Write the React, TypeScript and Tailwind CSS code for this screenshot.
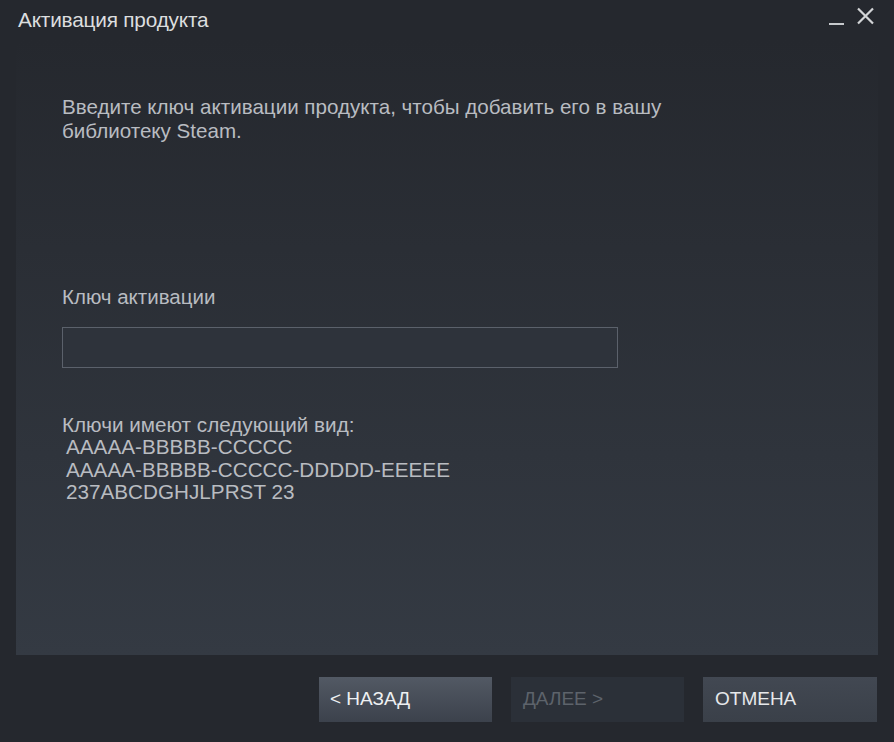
const font = { fontFamily: '"Liberation Sans", Arial, sans-serif' };

function TitleBar() {
  return (
    <div className="flex h-[40px] items-center justify-between pl-[18px] pr-[19px]">
      <span className="text-[20.8px] tracking-[-0.2px] text-[#dcdedf]">Активация продукта</span>
      <div className="flex items-start gap-[12px] pb-[8px]">
        <span className="mt-[16px] block h-[2px] w-[15px] bg-[#c6c9cc]" />
        <svg width="19" height="18" viewBox="0 0 19 18" className="text-[#d2d4d6]">
          <path d="M2 1.5 L17 16.5 M17 1.5 L2 16.5" stroke="currentColor" strokeWidth="2.2" />
        </svg>
      </div>
    </div>
  );
}

export default function App() {
  return (
    <div style={font} className="flex h-[742px] w-[894px] flex-col bg-[#25282e]">
      <TitleBar />
      <div className="mx-[16px] flex h-[615px] flex-col bg-gradient-to-b from-[#25282e] to-[#343a43] pl-[46px] pt-[55px]">
        <p className="text-[20.6px] leading-[24px] text-[#b9bcc1]">
          Введите ключ активации продукта, чтобы добавить его в вашу
          <br />
          библиотеку Steam.
        </p>

        <label className="mt-[143px] text-[20.5px] leading-[22px] text-[#b9bcc1]">
          Ключ активации
        </label>
        <input
          type="text"
          className="mt-[19px] h-[41px] w-[556px] border border-[#5b616b] bg-[#2e333b] px-2 text-[17px] text-white outline-none"
        />

        <div className="mt-[46px] text-[20.7px] leading-[22.3px] text-[#b9bcc1]">
          <div>Ключи имеют следующий вид:</div>
          <div className="pl-[4px]">AAAAA-BBBBB-CCCCC</div>
          <div className="pl-[4px]">AAAAA-BBBBB-CCCCC-DDDDD-EEEEE</div>
          <div className="pl-[4px]">237ABCDGHJLPRST 23</div>
        </div>
      </div>

      <div className="flex justify-end gap-[19px] pr-[17px] pt-[22px]">
        <button className="h-[45px] w-[173px] bg-gradient-to-b from-[#525964] to-[#3c424c] pl-[11px] text-left text-[19px] text-[#eef0f2]">
          &lt; НАЗАД
        </button>
        <button className="h-[45px] w-[173px] bg-[#2b3038] pl-[12px] text-left text-[19px] text-[#5d636b]" disabled>
          ДАЛЕЕ &gt;
        </button>
        <button className="h-[45px] w-[174px] bg-gradient-to-b from-[#424852] to-[#3a4049] pl-[12px] text-left text-[19px] text-[#e6e8ea]">
          ОТМЕНА
        </button>
      </div>
    </div>
  );
}
